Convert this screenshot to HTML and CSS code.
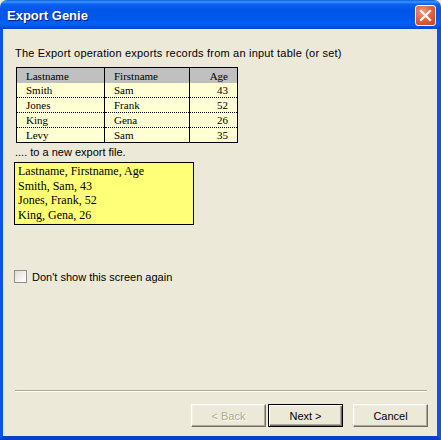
FILE: index.html
```html
<!DOCTYPE html>
<html>
<head>
<meta charset="utf-8">
<link rel="stylesheet" href="styles.css">
</head>
<body>
<div class="window">
  <div class="titlebar">
    <span class="title">Export Genie</span>
    <div class="close">
      <svg width="13" height="13" viewBox="0 0 13 13"><path d="M2 2 L11 11 M11 2 L2 11" stroke="#fff" stroke-width="2.2" stroke-linecap="square"/></svg>
    </div>
  </div>
  <div class="frame">
    <div class="content">
      <p class="intro">The Export operation exports records from an input table (or set)</p>
      <table class="grid">
        <thead>
          <tr><th class="c1">Lastname</th><th class="c2">Firstname</th><th class="c3">Age</th></tr>
        </thead>
        <tbody>
          <tr><td class="c1">Smith</td><td class="c2">Sam</td><td class="c3">43</td></tr>
          <tr><td class="c1">Jones</td><td class="c2">Frank</td><td class="c3">52</td></tr>
          <tr><td class="c1">King</td><td class="c2">Gena</td><td class="c3">26</td></tr>
          <tr><td class="c1">Levy</td><td class="c2">Sam</td><td class="c3">35</td></tr>
        </tbody>
      </table>
      <p class="tail">.... to a new export file.</p>
      <div class="output">
        <div>Lastname, Firstname, Age</div>
        <div>Smith, Sam, 43</div>
        <div>Jones, Frank, 52</div>
        <div>King, Gena, 26</div>
      </div>
      <label class="check"><span class="box"></span><span>Don't show this screen again</span></label>
    </div>
    <div class="separator"></div>
    <div class="buttons">
      <button class="btn disabled">&lt; Back</button>
      <button class="btn default">Next &gt;</button>
      <button class="btn cancel">Cancel</button>
    </div>
  </div>
</div>
</body>
</html>
```
FILE: styles.css
```css
html, body { margin: 0; padding: 0; background: #ECE9D8; }
.window {
  width: 441px; height: 440px;
  display: flex; flex-direction: column;
  font-family: Tahoma, "Liberation Sans", Arial, sans-serif;
  font-size: 11px; color: #000;
}
.titlebar {
  height: 29px; flex: none;
  display: flex; align-items: center; justify-content: space-between;
  padding: 0 5px 0 7px;
  border-radius: 7px 7px 0 0;
  background: linear-gradient(180deg, #0A5FDB 0, #3D95FF 2px, #0B62F0 4px, #0055E8 10px, #0058EE 18px, #0261F7 24px, #0050DD 27px, #0046C4 29px);
  box-sizing: border-box;
}
.title {
  color: #fff; font-weight: bold; font-size: 13px;
  font-family: "Liberation Sans", Arial, sans-serif;
  text-shadow: 1px 1px #0A1888;
  margin-top: 1px;
}
.close {
  width: 21px; height: 21px; box-sizing: border-box;
  border: 1px solid #fff; border-radius: 3px;
  background: radial-gradient(circle at 35% 30%, #F09A7C 0, #E2653F 45%, #C8421A 100%);
  display: flex; align-items: center; justify-content: center;
  margin-top: 2px;
}
.frame {
  flex: 1; display: flex; flex-direction: column;
  border-left: 3px solid #0B54E8;
  border-right: 4px solid #0B54E8;
  border-bottom: 4px solid #0841C8;
  background: #ECE9D8;
}
.content { flex: 1; padding: 18px 0 0 12px; }
.intro { margin: 0; line-height: 13px; letter-spacing: 0.2px; }
.grid {
  margin: 7px 0 0 1px;
  border-collapse: collapse;
  border: 1px solid #000;
  font-family: "Liberation Serif", "Times New Roman", serif;
  font-size: 11px;
  width: 222px;
}
.grid th, .grid td {
  padding: 0 9px; height: 14px; line-height: 14px; font-weight: normal; text-align: left;
}
.grid th { background: #C0C0C0; height: 15px; }
.grid td {
  background: #FFFFD4;
  border-bottom: 1px dotted #000;
}
.grid tr:last-child td { border-bottom: none; }
.grid .c1 { width: 69px; border-right: 1px solid #000; }
.grid .c2 { width: 66px; border-right: 1px solid #000; }
.grid .c3 { text-align: right; }
.tail { margin: 3px 0 0; line-height: 13px; }
.output {
  margin: 3px 0 0 -1px;
  width: 180px; box-sizing: border-box;
  border: 1px solid #000;
  padding: 1px 0 2px 3px;
  background: #FFFF78;
  font-family: "Liberation Serif", "Times New Roman", serif;
  font-size: 12px; line-height: 14.5px;
}
.check {
  display: flex; align-items: center; gap: 5px;
  margin: 45px 0 0 -1px;
}
.box {
  width: 13px; height: 13px; box-sizing: border-box;
  border: 1px solid #8E8F8F;
  background: linear-gradient(135deg, #DCDCD7 0, #F5F4EF 60%, #fff 100%);
}
.separator {
  margin: 0 10px 0 12px;
  border-top: 1px solid #ACA899; border-bottom: 1px solid #fff;
  height: 0;
}
.buttons {
  display: flex; justify-content: flex-end;
  padding: 12px 9px 9px 0;
}
.btn {
  width: 75px; height: 23px; box-sizing: border-box;
  font-family: Tahoma, "Liberation Sans", Arial, sans-serif; font-size: 11px;
  color: #000; background: #ECE9D8;
  border: 1px solid; border-color: #fff #716F64 #716F64 #fff;
  box-shadow: inset -1px -1px #ACA899, inset 1px 1px #F1EFE2;
  padding: 0; margin: 0;
}
.btn.disabled { color: #ACA899; text-shadow: 1px 1px #fff; }
.btn.default {
  margin-left: 2px;
  border: 1px solid #000;
  box-shadow: inset 1px 1px #fff, inset -1px -1px #716F64, inset -2px -2px #ACA899;
}
.btn.cancel { margin-left: 10px; }
```
